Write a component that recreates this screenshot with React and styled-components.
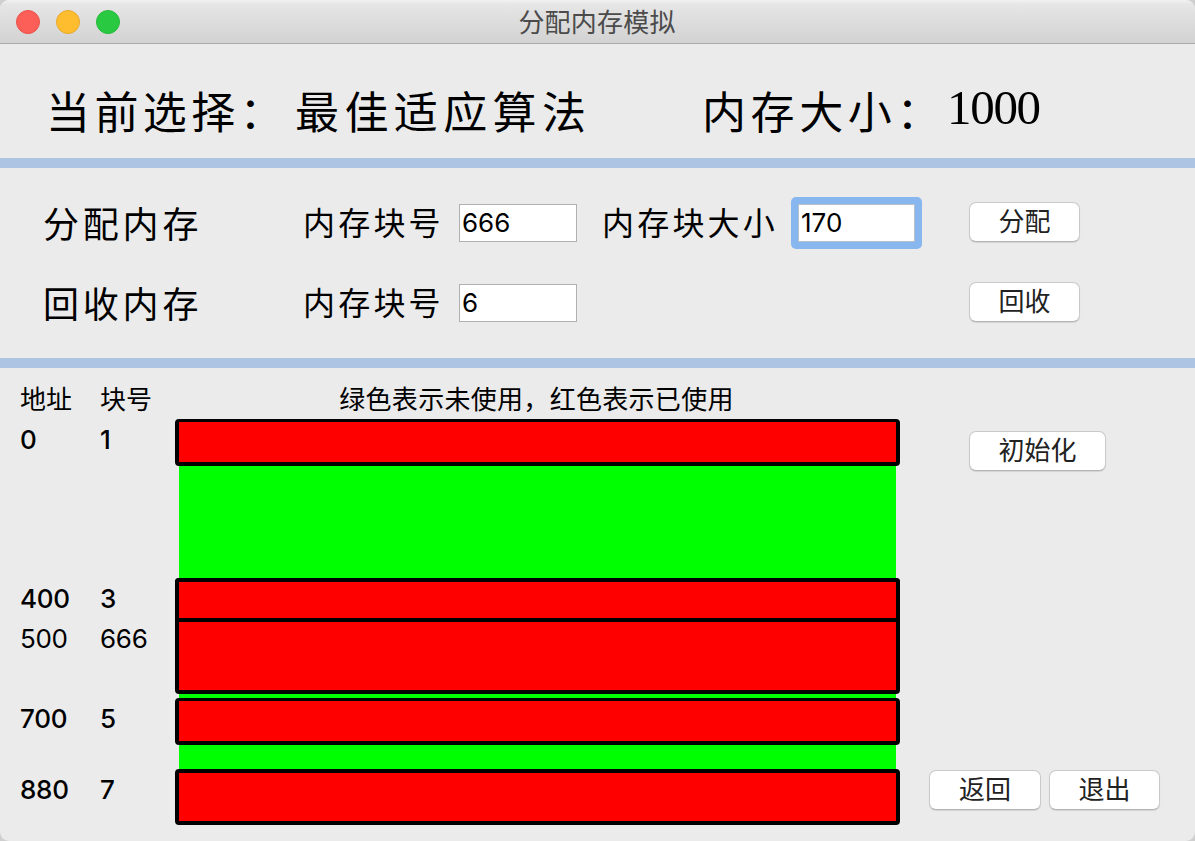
import React from "react";
import styled, { createGlobalStyle } from "styled-components";

const sans = '"Inter", "Noto Sans CJK SC", sans-serif';
const kai = '"Kaiti SC", "STKaiti", "KaiTi", "Noto Sans CJK SC", serif';

const GlobalStyle = createGlobalStyle`
  * { box-sizing: border-box; }
  body { margin: 0; background: #cfcfcf; overflow: hidden; }
`;

const Window = styled.div`
  width: 1195px;
  height: 841px;
  display: flex;
  flex-direction: column;
  overflow: hidden;
  border-radius: 9px;
  background: #ebebeb;
  color: #000;
  font-family: ${sans};
  font-size: 26px;
`;

const TitleBar = styled.header`
  height: 44px;
  flex: none;
  display: grid;
  grid-template-columns: 200px 1fr 200px;
  align-items: center;
  background: linear-gradient(#f2f2f2 0, #e6e6e6 10%, #d2d2d2 100%);
  border-bottom: 1px solid #ababab;
`;

const Lights = styled.div`
  display: flex;
  gap: 16px;
  padding-left: 16px;
`;

const Light = styled.span`
  width: 24px;
  height: 24px;
  border-radius: 50%;
  background: ${(p) => p.$color};
  border: 1px solid ${(p) => p.$edge};
`;

const Title = styled.h1`
  margin: 0;
  padding: 3px 1px 0 0;
  text-align: center;
  font-size: 26px;
  letter-spacing: 0.2px;
  line-height: 40px;
  font-weight: 400;
  color: #4b4b4b;
`;

const Summary = styled.section`
  height: 114px;
  flex: none;
  display: flex;
  align-items: center;
  padding: 17px 0 0 46px;
`;

const Heading = styled.span`
  width: ${(p) => p.$width}px;
  font-family: ${kai};
  font-size: 44px;
  letter-spacing: ${(p) => p.$spacing || 5.1}px;
  line-height: 60px;
  white-space: nowrap;
`;

const Total = styled.span`
  padding-bottom: 3px;
  font-family: "Liberation Serif", serif;
  font-size: 49px;
  line-height: 60px;
  letter-spacing: -1.3px;
`;

const Divider = styled.div`
  height: 10px;
  flex: none;
  background: #adc4e2;
`;

const Controls = styled.section`
  height: 190px;
  flex: none;
  padding: 15px 0;
`;

const ControlRow = styled.form`
  height: 80px;
  display: grid;
  grid-template-columns: 260px 157px 142px 197px 171px auto;
  align-items: center;
  justify-content: start;
  padding-left: 42px;
`;

const RowName = styled.span`
  padding: 0 0 3px 1px;
  font-family: ${kai};
  font-size: 36px;
  letter-spacing: 3.8px;
  line-height: 44px;
  white-space: nowrap;
`;

const FieldLabel = styled.label`
  padding: 0 0 4px 1px;
  font-family: ${kai};
  font-size: 32px;
  letter-spacing: 3.2px;
  line-height: 44px;
  white-space: nowrap;
`;

const Field = styled.input`
  width: ${(p) => (p.$focused ? 117 : 118)}px;
  height: 38px;
  padding: 0 2px 1px;
  border: 1px solid ${(p) => (p.$focused ? "#b9c0c9" : "#b0b0b0")};
  border-radius: 0;
  outline: none;
  background: #fff;
  color: #000;
  font: 400 26px ${sans};
  box-shadow: ${(p) => (p.$focused ? "0 0 0 7px #88b6ef" : "none")};
  clip-path: ${(p) => (p.$focused ? "inset(-7px round 5px)" : "none")};
`;

const Button = styled.button`
  width: ${(p) => p.$width || 111}px;
  height: 40px;
  padding: 0;
  border: 1px solid #c9c9c9;
  border-bottom-color: #b3b3b3;
  border-radius: 7px;
  background: #fff;
  color: #222;
  font: 400 26px/38px ${sans};
  box-shadow: 0 1px 1px rgba(0, 0, 0, 0.1);
`;

const RowButton = styled(Button)`
  margin-bottom: 2px;
`;

const Memory = styled.section`
  flex: 1;
  display: grid;
  grid-template-columns: 900px 1fr;
`;

const columns = "80px 75px 725px";

const Table = styled.div`
  padding-left: 20px;
`;

const TableHead = styled.div`
  height: 51px;
  display: grid;
  grid-template-columns: ${columns};
  line-height: 36px;
  padding-top: 14px;
`;

const Legend = styled.span`
  padding-right: 2px;
  text-align: center;
  letter-spacing: 0.3px;
`;

const MemoryRow = styled.div`
  height: ${(p) => p.$height}px;
  display: grid;
  grid-template-columns: ${columns};
`;

const Cell = styled.span`
  height: 40px;
  line-height: ${(p) => (p.$thinTop ? 41 : 42)}px;
  font-weight: ${(p) => p.$weight};
  letter-spacing: -0.3px;
`;

const UsedBlock = styled.div`
  background: #f00;
  border: 4px solid #000;
  border-top-width: ${(p) => (p.$thinTop ? 3 : 4)}px;
  border-bottom-width: ${(p) => (p.$openBottom ? 0 : 4)}px;
  border-radius: ${(p) => (p.$joined ? "0" : "4px")} ${(p) => (p.$joined ? "0" : "4px")}
    ${(p) => (p.$openBottom ? "0 0" : "4px 4px")};
`;

const FreeBlock = styled.div`
  grid-column: 3;
  margin: 0 4px;
  background: #0f0;
`;

const Side = styled.aside`
  display: flex;
  flex-direction: column;
  align-items: flex-start;
  justify-content: space-between;
  padding: 63px 0 31px 29px;
`;

const ResetSlot = styled.div`
  padding-left: 40px;
`;

const Actions = styled.div`
  display: flex;
  gap: 8px;
`;

const blocks = [
  { address: 0, id: 1, height: 47, weight: 500, thinTop: true },
  { height: 112 },
  { address: 400, id: 3, height: 40, weight: 500, openBottom: true },
  { address: 500, id: 666, height: 76, weight: 400, joined: true },
  { height: 4 },
  { address: 700, id: 5, height: 47, weight: 500, thinTop: true },
  { height: 24 },
  { address: 880, id: 7, height: 56, weight: 500 },
];

export default function App() {
  return (
    <>
      <GlobalStyle />
      <Window>
        <TitleBar>
          <Lights>
            <Light $color="#fc5f57" $edge="#ea5149" />
            <Light $color="#fdbd2f" $edge="#e8a92b" />
            <Light $color="#29ca41" $edge="#26b93a" />
          </Lights>
          <Title>分配内存模拟</Title>
        </TitleBar>

        <Summary>
          <Heading $width={249} $spacing={4.4}>当前选择：</Heading>
          <Heading $width={407} $spacing={5.4}>最佳适应算法</Heading>
          <Heading $width={245} $spacing={4.6}>内存大小：</Heading>
          <Total>1000</Total>
        </Summary>
        <Divider />

        <Controls>
          <ControlRow>
            <RowName>分配内存</RowName>
            <FieldLabel>内存块号</FieldLabel>
            <Field defaultValue="666" />
            <FieldLabel>内存块大小</FieldLabel>
            <Field defaultValue="170" $focused />
            <RowButton type="button">分配</RowButton>
          </ControlRow>
          <ControlRow>
            <RowName>回收内存</RowName>
            <FieldLabel>内存块号</FieldLabel>
            <Field defaultValue="6" />
            <span />
            <span />
            <RowButton type="button">回收</RowButton>
          </ControlRow>
        </Controls>
        <Divider />

        <Memory>
          <Table>
            <TableHead>
              <span>地址</span>
              <span>块号</span>
              <Legend>绿色表示未使用，红色表示已使用</Legend>
            </TableHead>
            {blocks.map((b, i) => (
              <MemoryRow key={i} $height={b.height}>
                {b.id === undefined ? (
                  <FreeBlock />
                ) : (
                  <>
                    <Cell $weight={b.weight} $thinTop={b.thinTop}>{b.address}</Cell>
                    <Cell $weight={b.weight} $thinTop={b.thinTop}>{b.id}</Cell>
                    <UsedBlock
                      $thinTop={b.thinTop}
                      $openBottom={b.openBottom}
                      $joined={b.joined}
                    />
                  </>
                )}
              </MemoryRow>
            ))}
          </Table>
          <Side>
            <ResetSlot>
              <Button type="button" $width={137}>初始化</Button>
            </ResetSlot>
            <Actions>
              <Button type="button" $width={112}>返回</Button>
              <Button type="button">退出</Button>
            </Actions>
          </Side>
        </Memory>
      </Window>
    </>
  );
}
